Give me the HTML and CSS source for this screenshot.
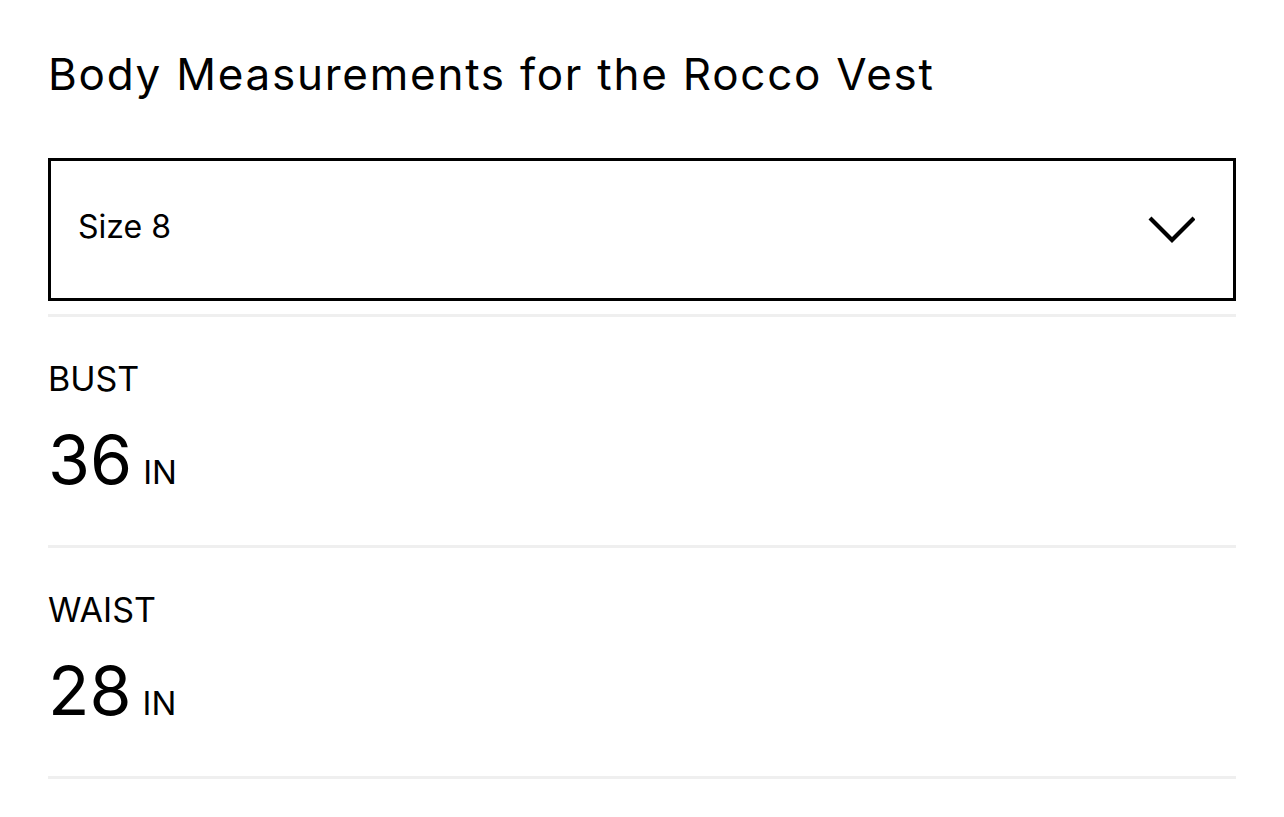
FILE: index.html
```html
<!DOCTYPE html>
<html>
<head>
<meta charset="utf-8">
<link rel="stylesheet" href="styles.css">
</head>
<body>
<div class="page">
  <h1 class="title">Body Measurements for the Rocco Vest</h1>
  <div class="select">
    <span class="select-label">Size 8</span>
    <svg class="chevron" width="48" height="28" viewBox="0 0 48 28"><polyline points="3,2 25,24 47,2" fill="none" stroke="#000" stroke-width="4.2"/></svg>
  </div>
  <div class="rule"></div>
  <div class="row">
    <div class="label">BUST</div>
    <div class="value"><span class="num">36</span><span class="unit">IN</span></div>
  </div>
  <div class="row">
    <div class="label">WAIST</div>
    <div class="value"><span class="num">28</span><span class="unit">IN</span></div>
  </div>
</div>
</body>
</html>
```

FILE: styles.css
```css
html, body {
  margin: 0;
  padding: 0;
  background: #fff;
}
body {
  font-family: "Inter", "Liberation Sans", sans-serif;
  color: #000;
}
.page {
  padding: 44px 48px 0;
}
.title {
  margin: 0;
  font-weight: 400;
  font-size: 44px;
  line-height: 60px;
  letter-spacing: 1.75px;
}
.select {
  margin-top: 54px;
  height: 143px;
  box-sizing: border-box;
  border: 3px solid #000;
  display: flex;
  align-items: center;
  justify-content: space-between;
  padding: 0 38px 0 27px;
}
.select-label {
  font-size: 32px;
  line-height: 40px;
  padding-bottom: 6px;
}
.chevron {
  display: block;
}
.rule {
  margin-top: 13px;
  height: 3px;
  background: #efefef;
}
.row {
  border-bottom: 3px solid #efefef;
  padding: 40px 0 46px;
}
.label {
  font-size: 34px;
  line-height: 44px;
}
.value {
  margin-top: 18px;
  display: flex;
  align-items: baseline;
}
.num {
  font-size: 68px;
  line-height: 80px;
}
.unit {
  font-size: 33px;
  margin-left: 11px;
}
```
